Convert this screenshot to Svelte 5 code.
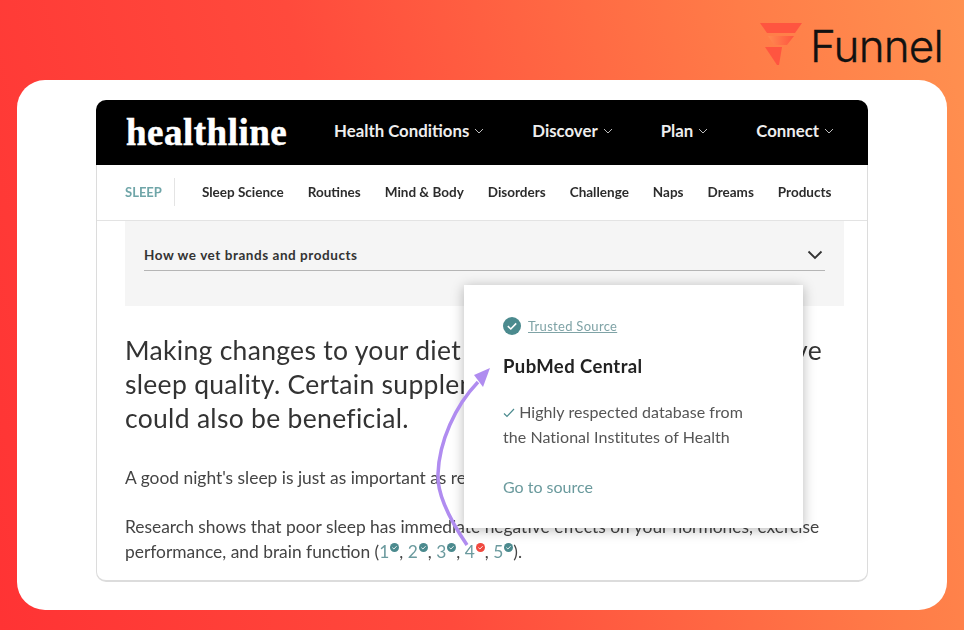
<script>
  const mainNav = ['Health Conditions', 'Discover', 'Plan', 'Connect'];
  const subNav = ['Sleep Science', 'Routines', 'Mind & Body', 'Disorders', 'Challenge', 'Naps', 'Dreams', 'Products'];
  const refs = [
    { n: 1, red: false, sep: ', ' },
    { n: 2, red: false, sep: ', ' },
    { n: 3, red: false, sep: ', ' },
    { n: 4, red: true, sep: ', ' },
    { n: 5, red: false, sep: '' }
  ];
</script>

<div class="page">
  <header class="brand">
    <svg class="brand-mark" width="44" height="44" viewBox="0 0 44 44">
      <defs>
        <linearGradient id="mid" x1="0" x2="1" y1="0" y2="0">
          <stop offset="0" stop-color="#ff8a50" />
          <stop offset="1" stop-color="#ff5540" />
        </linearGradient>
      </defs>
      <polygon points="0,0 42,0 35,10 7,10" fill="#ff5540" />
      <polygon points="8,13 34,13 27,22 14,22" fill="url(#mid)" />
      <polygon points="5,24 22,24 19,42 17,42" fill="#ff5540" />
    </svg>
    <span class="brand-name">Funnel</span>
  </header>

  <main class="card">
    <div class="shot">
      <nav class="topbar">
        <span class="logo">healthline</span>
        <ul class="main-nav">
          {#each mainNav as item}
            <li>
              {item}
              <svg width="10" height="6" viewBox="0 0 10 6"><path d="M1 1l4 4 4-4" fill="none" stroke="#bbb" stroke-width="1" /></svg>
            </li>
          {/each}
        </ul>
      </nav>

      <nav class="subbar">
        <span class="section">SLEEP</span>
        <ul class="sub-nav">
          {#each subNav as item}
            <li>{item}</li>
          {/each}
        </ul>
      </nav>

      <div class="article">
        <div class="vet">
          <div class="vet-row">
            <span>How we vet brands and products</span>
            <svg width="16" height="10" viewBox="0 0 16 10"><path d="M1.5 1.5L8 8l6.5-6.5" fill="none" stroke="#333" stroke-width="1.8" /></svg>
          </div>
        </div>

        <p class="lead">Making changes to your diet and lifestyle can help improve<br />sleep quality. Certain supplements<br />could also be beneficial.</p>
        <p class="body one">A good night's sleep is just as important as regular exercise and a healthy diet.</p>
        <p class="body">
          Research shows that poor sleep has immediate negative effects on your hormones, exercise<br />performance, and brain function ({#each refs as r}<span class="ref">{r.n}<svg class="dot" width="9" height="9" viewBox="0 0 9 9"><circle cx="4.5" cy="4.5" r="4.5" fill={r.red ? '#f0483e' : '#4b8a8e'} /><path d="M2.4 4.6l1.5 1.4 2.7-2.8" fill="none" stroke="#fff" stroke-width="0.9" /></svg></span>{r.sep}{/each}).
        </p>

        <aside class="popup">
          <div class="trust">
            <svg width="18" height="18" viewBox="0 0 18 18">
              <circle cx="9" cy="9" r="9" fill="#4b8a8e" />
              <path d="M4.8 9.2l3 2.8 5.4-5.6" fill="none" stroke="#fff" stroke-width="1.6" />
            </svg>
            <span>Trusted Source</span>
          </div>
          <h4>PubMed Central</h4>
          <p class="desc">
            <svg width="12" height="10" viewBox="0 0 12 10"><path d="M1 5.5l3 3L11 1" fill="none" stroke="#4b8a8e" stroke-width="1.2" /></svg>
            Highly respected database from<br />the National Institutes of Health
          </p>
          <span class="go">Go to source</span>
        </aside>
      </div>
    </div>

    <svg class="arrow" width="70" height="190" viewBox="0 0 70 190">
      <path d="M36 183C17 155 6 130 7 112C8 80 24 44 47 20" fill="none" stroke="#b08cf0" stroke-width="3.5" />
      <polygon points="59,6 43,13 52,25" fill="#b08cf0" />
    </svg>
  </main>
</div>

<style>
  :global(body) {
    margin: 0;
  }

  .page {
    position: relative;
    width: 964px;
    height: 630px;
    overflow: hidden;
    background: linear-gradient(75deg, #ff3334 0%, #ff4a3c 40%, #ff7c48 80%, #ff9150 100%);
    font-family: Lato, "Liberation Sans", sans-serif;
  }

  .brand {
    height: 80px;
    display: flex;
    justify-content: flex-end;
    align-items: flex-start;
    padding-right: 21px;
    box-sizing: border-box;
  }

  .brand-mark {
    margin-top: 23px;
    margin-right: 6px;
  }

  .brand-name {
    margin-top: 20px;
    font-family: Inter, sans-serif;
    font-size: 44px;
    line-height: 52px;
    font-weight: 300;
    color: #111;
    letter-spacing: -0.8px;
    -webkit-text-stroke: 0.3px #111;
  }

  .card {
    position: relative;
    margin: 0 17px;
    height: 530px;
    box-sizing: border-box;
    padding: 20px 79px 0;
    background: #fff;
    border-radius: 28px;
  }

  .shot {
    height: 482px;
    box-sizing: border-box;
    border: 1px solid #dcdcdc;
    border-bottom-width: 2px;
    border-top: 0;
    border-radius: 10px;
    filter: blur(0.5px);
  }

  .topbar {
    height: 65px;
    margin: 0 -1px;
    background: #000;
    border-radius: 10px 10px 0 0;
    display: flex;
    align-items: center;
    padding: 0 34px 0 30px;
    justify-content: space-between;
  }

  .logo {
    font-family: "Liberation Serif", serif;
    font-weight: 700;
    font-size: 37px;
    letter-spacing: 0.5px;
    color: #fff;
    -webkit-text-stroke: 0.5px #fff;
  }

  ul {
    list-style: none;
    margin: 0;
    padding: 0;
    display: flex;
  }

  .main-nav {
    gap: 48px;
    margin-bottom: 4px;
  }

  .main-nav li {
    color: #eee;
    font-size: 16.8px;
    font-weight: 700;
    display: flex;
    align-items: center;
    gap: 5px;
  }

  .subbar {
    height: 56px;
    box-sizing: border-box;
    border-bottom: 1px solid #e3e3e3;
    display: flex;
    align-items: center;
    padding-left: 28px;
    padding-bottom: 2px;
  }

  .section {
    color: #6fa5a8;
    font-size: 13px;
    font-weight: 700;
    padding: 6px 12px 6px 0;
    border-right: 1px solid #e4e4e4;
  }

  .sub-nav {
    margin-left: 27px;
    gap: 24px;
  }

  .sub-nav li {
    color: #2c2c2c;
    font-size: 13.5px;
    font-weight: 700;
  }

  .article {
    position: relative;
    padding: 0 28px;
  }

  .vet {
    height: 85px;
    margin-right: -5px;
    background: #f5f5f5;
    padding: 0 19px;
    box-sizing: border-box;
  }

  .vet-row {
    height: 50px;
    box-sizing: border-box;
    padding: 18px 2px 0 0;
    border-bottom: 1px solid #b5b5b5;
    display: flex;
    justify-content: space-between;
    align-items: center;
    color: #333;
    font-size: 13.5px;
    letter-spacing: 0.55px;
    font-weight: 700;
  }

  .lead {
    margin: 27px 0 0;
    white-space: nowrap;
    font-size: 26.5px;
    line-height: 34px;
    letter-spacing: 0.3px;
    color: #333;
  }

  .body {
    margin: 0;
    white-space: nowrap;
    font-size: 17.4px;
    line-height: 25px;
    color: #444;
  }

  .one {
    margin: 30px 0 24px;
  }

  .ref {
    color: #6b9a9e;
  }

  .dot {
    margin-left: 1px;
    vertical-align: 6px;
  }

  .popup {
    position: absolute;
    left: 367px;
    top: 64px;
    width: 339px;
    height: 243px;
    box-sizing: border-box;
    padding: 32px 39px;
    background: #fff;
    box-shadow: 0 2px 12px rgba(0, 0, 0, 0.28);
  }

  .trust {
    display: flex;
    align-items: center;
    gap: 7px;
    color: #7fa3a6;
    font-size: 13px;
    letter-spacing: 0.3px;
    text-decoration: underline;
  }

  h4 {
    margin: 19px 0 0;
    font-size: 18.5px;
    line-height: 24px;
    letter-spacing: 0.4px;
    font-weight: 700;
    color: #222;
  }

  .desc {
    margin: 21px 0 0;
    white-space: nowrap;
    font-size: 16px;
    line-height: 25px;
    letter-spacing: 0.05px;
    color: #555;
  }

  .go {
    display: block;
    margin-top: 28px;
    color: #6a9a9d;
    font-size: 16px;
  }

  .arrow {
    position: absolute;
    left: 414px;
    top: 282px;
  }
</style>
